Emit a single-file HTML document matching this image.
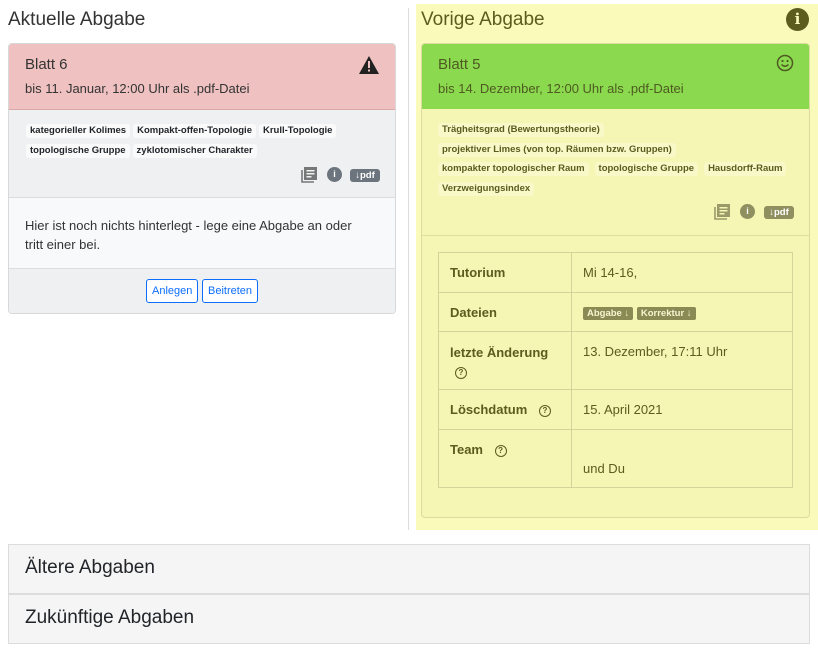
<!DOCTYPE html>
<html><head><meta charset="utf-8"><style>
*{box-sizing:border-box;margin:0;padding:0}
body{width:818px;height:653px;background:#fff;font-family:"Liberation Sans",sans-serif;color:#212529;position:relative;overflow:hidden;font-size:13px}
.abs{position:absolute}
h2{font-weight:normal;font-size:19px}
.tags{line-height:19.5px}
.tag{display:inline-block;font-size:9.5px;font-weight:bold;padding:1px 4px;border-radius:3px;margin:0 3px 0 0;line-height:12px;vertical-align:top;margin-top:3px}
.tagrow{height:19.5px;white-space:nowrap}
.btn{display:inline-block;border:1px solid #0d6efd;color:#0d6efd;border-radius:3px;font-size:11px;padding:5px 5px;background:#fff}
table{border-collapse:collapse;font-size:13px;color:#5c5c1f;table-layout:fixed}
td{border:1px solid #d3d39a;padding:11px 11px 0;vertical-align:top;line-height:17px}
.q{display:inline-block;width:12px;height:12px;border:1.5px solid #5c5c1f;border-radius:50%;font-size:8px;text-align:center;line-height:9px;font-weight:bold;margin-left:8px;vertical-align:middle}
.acc{position:absolute;left:8px;width:802px;height:50px;background:#f5f5f5;border:1px solid #dcdcdc;font-size:19px;padding:12px 16px}
</style></head><body>
<h2 class="abs" style="left:8px;top:9px;color:#333">Aktuelle Abgabe</h2>
<div class="abs" style="left:8px;top:43px;width:388px;height:271px;border:1px solid #d8d8d8;border-radius:4px;overflow:hidden;background:#f8f9fa">
 <div style="height:66px;background:#efc1c1;border-bottom:1px solid #d9a9a9;padding:12px 16px;color:#333;position:relative">
  <div style="font-size:15px">Blatt 6</div>
  <div style="font-size:13px;margin-top:8px">bis 11. Januar, 12:00 Uhr als .pdf-Datei</div>
  <svg class="abs" style="right:16px;top:12px" width="20" height="18" viewBox="0 0 20 18"><path d="M10 0L20 18H0Z" fill="#222"/><rect x="9" y="5" width="2" height="7" fill="#efc1c1"/><rect x="9" y="13.5" width="2" height="2" fill="#efc1c1"/></svg>
 </div>
 <div class="tags" style="height:88px;background:#eff0f2;border-bottom:1px solid #ddd;padding:11px 16px 0 17px;position:relative">
  <div class="tagrow"><span class="tag" style="background:#fafafa">kategorieller Kolimes</span><span class="tag" style="background:#fafafa">Kompakt-offen-Topologie</span><span class="tag" style="background:#fafafa">Krull-Topologie</span></div>
  <div class="tagrow"><span class="tag" style="background:#fafafa">topologische Gruppe</span><span class="tag" style="background:#fafafa">zyklotomischer Charakter</span></div>
  <svg class="abs" style="left:292px;top:57px" width="16" height="16" viewBox="0 0 16 16"><rect x="3" y="0" width="13" height="13" fill="#777"/><rect x="5.5" y="3" width="8" height="1.5" fill="#eff0f2"/><rect x="5.5" y="6" width="8" height="1.5" fill="#eff0f2"/><rect x="5.5" y="9" width="5" height="1.5" fill="#eff0f2"/><path d="M1 3V15H13" stroke="#777" stroke-width="1.6" fill="none"/></svg>
  <div class="abs" style="left:318px;top:57px;width:15px;height:15px;border-radius:50%;background:#6c757d;color:#fff;font-size:9px;font-weight:bold;text-align:center;line-height:15px">i</div>
  <div class="abs" style="left:341px;top:59px;width:30px;height:13px;border-radius:3px;background:#6c757d;color:#fff;font-size:9.5px;font-weight:bold;text-align:center;line-height:13px">↓pdf</div>
 </div>
 <div style="height:71px;border-bottom:1px solid #ddd;padding:18px 30px 18px 16px;font-size:13px;line-height:19px;color:#333">Hier ist noch nichts hinterlegt - lege eine Abgabe an oder tritt einer bei.</div>
 <div style="background:#eff0f2;height:46px;text-align:center;padding-top:10px"><span class="btn">Anlegen</span> <span class="btn">Beitreten</span></div>
</div>
<div class="abs" style="left:408px;top:8px;width:1px;height:522px;background:#ddd"></div>
<div class="abs" style="left:416px;top:4px;width:402px;height:526px;background:#fafabb"></div>
<h2 class="abs" style="left:421px;top:9px;color:#5c5c1f">Vorige Abgabe</h2>
<div class="abs" style="left:786px;top:8px;width:23px;height:23px;border-radius:50%;background:#5c5c1f;color:#fafabb;font-weight:bold;font-size:15px;text-align:center;line-height:23px;font-family:'DejaVu Serif',serif">i</div>
<div class="abs" style="left:421px;top:43px;width:389px;height:475px;border:1px solid #dcdc9f;border-radius:4px;overflow:hidden;background:#f5f5b4">
 <div style="height:65px;background:#8ad94e;padding:12px 16px;color:#4f5a22;position:relative">
  <div style="font-size:15px">Blatt 5</div>
  <div style="font-size:13px;margin-top:8px">bis 14. Dezember, 12:00 Uhr als .pdf-Datei</div>
  <svg class="abs" style="right:15px;top:10px" width="18" height="18" viewBox="0 0 18 18"><circle cx="9" cy="9" r="7.5" stroke="#4f5a22" stroke-width="1.5" fill="none"/><circle cx="6.5" cy="7" r="1.1" fill="#4f5a22"/><circle cx="11.5" cy="7" r="1.1" fill="#4f5a22"/><path d="M5.5 10.5Q9 14 12.5 10.5" stroke="#4f5a22" stroke-width="1.4" fill="none"/></svg>
 </div>
 <div class="tags" style="height:127px;border-bottom:1px solid #dede9f;padding:11px 16px 0 16px;position:relative;color:#5c5c1f">
  <div class="tagrow"><span class="tag" style="background:#f8f8c8">Trägheitsgrad (Bewertungstheorie)</span></div>
  <div class="tagrow"><span class="tag" style="background:#f8f8c8">projektiver Limes (von top. Räumen bzw. Gruppen)</span></div>
  <div class="tagrow"><span class="tag" style="background:#f8f8c8">kompakter topologischer Raum</span><span class="tag" style="background:#f8f8c8;margin-left:3px">topologische Gruppe</span><span class="tag" style="background:#f8f8c8;margin-left:3px">Hausdorff-Raum</span></div>
  <div class="tagrow"><span class="tag" style="background:#f8f8c8">Verzweigungsindex</span></div>
  <svg class="abs" style="left:292px;top:95px" width="16" height="16" viewBox="0 0 16 16"><rect x="3" y="0" width="13" height="13" fill="#9a9a6a"/><rect x="5.5" y="3" width="8" height="1.5" fill="#f5f5b4"/><rect x="5.5" y="6" width="8" height="1.5" fill="#f5f5b4"/><rect x="5.5" y="9" width="5" height="1.5" fill="#f5f5b4"/><path d="M1 3V15H13" stroke="#9a9a6a" stroke-width="1.6" fill="none"/></svg>
  <div class="abs" style="left:318px;top:95px;width:15px;height:15px;border-radius:50%;background:#8f8f60;color:#fff;font-size:9px;font-weight:bold;text-align:center;line-height:15px">i</div>
  <div class="abs" style="left:342px;top:97px;width:30px;height:13px;border-radius:3px;background:#8f8f60;color:#fff;font-size:9.5px;font-weight:bold;text-align:center;line-height:13px">↓pdf</div>
 </div>
 <table class="abs" style="left:16px;top:208px;width:355px">
  <tr><td style="width:133px;height:40px;font-weight:bold">Tutorium</td><td>Mi 14-16,</td></tr>
  <tr><td style="height:39px;font-weight:bold">Dateien</td><td style="padding-top:12px;line-height:14px"><span style="background:#8a8a55;color:#f5f5d0;font-size:9.5px;font-weight:bold;padding:1px 4px;border-radius:2px">Abgabe ↓</span> <span style="background:#8a8a55;color:#f5f5d0;font-size:9.5px;font-weight:bold;padding:1px 4px;border-radius:2px">Korrektur ↓</span></td></tr>
  <tr><td style="height:58px;font-weight:bold;line-height:19px">letzte Änderung<br><span class="q" style="margin-left:5px">?</span></td><td>13. Dezember, 17:11 Uhr</td></tr>
  <tr><td style="height:40px;font-weight:bold">Löschdatum <span class="q">?</span></td><td>15. April 2021</td></tr>
  <tr><td style="height:58px;font-weight:bold">Team <span class="q">?</span></td><td style="padding-top:30px">und Du</td></tr>
 </table>
</div>
<div class="acc" style="top:544px">Ältere Abgaben</div>
<div class="acc" style="top:594px">Zukünftige Abgaben</div>
</body></html>
